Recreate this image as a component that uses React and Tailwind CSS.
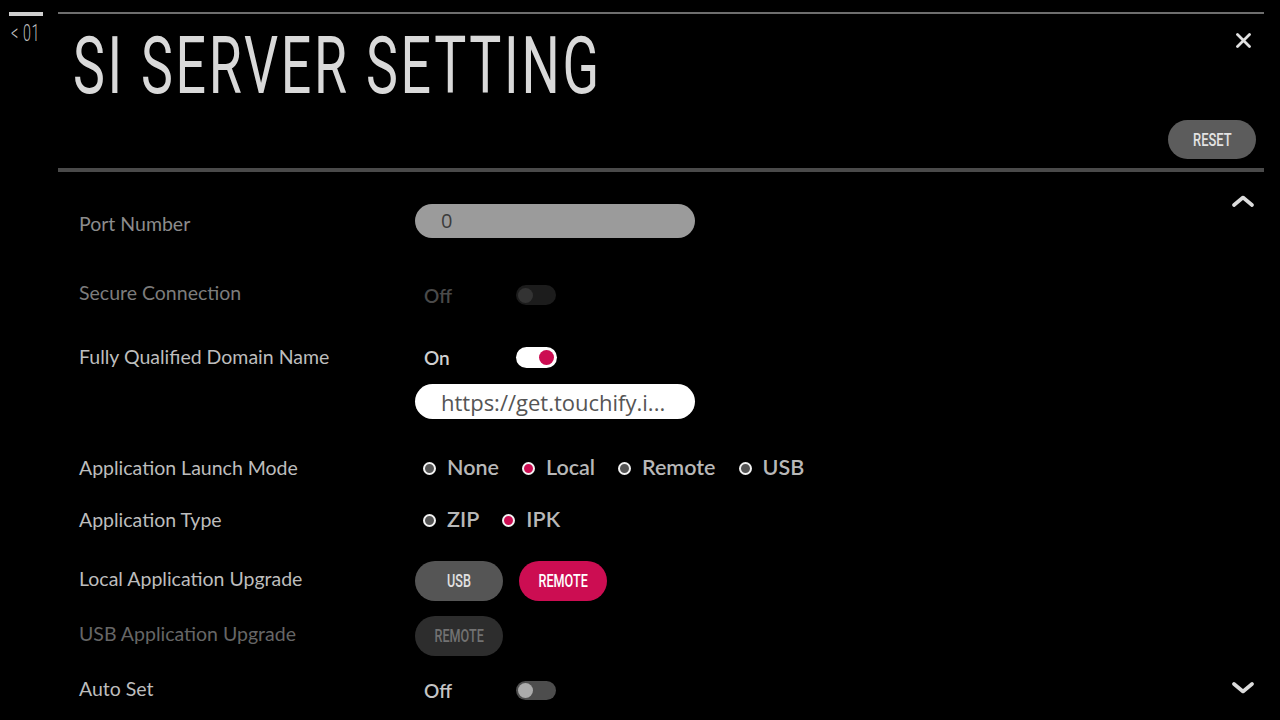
import React from 'react';

const Condensed = ({ children, className = '' }) => (
    <span className={`inline-block font-['Roboto',sans-serif] leading-none ${className}`}>
        {children}
    </span>
);

const Label = ({ children, tone = 'text-[#bdbdbd]', className = '' }) => (
    <div className={`w-[336px] shrink-0 text-[19.5px] leading-none ${tone} ${className}`}>
        {children}
    </div>
);

const Toggle = ({ state }) => {
    // state: 'disabled' | 'on' | 'off'
    if (state === 'on') {
        return (
            <div className="w-[41px] h-[21px] rounded-full bg-white flex items-center justify-end pr-[3px]">
                <div className="w-[15px] h-[15px] rounded-full bg-[#cc0d52]" />
            </div>
        );
    }
    if (state === 'disabled') {
        return (
            <div className="w-[40px] h-[20px] rounded-full bg-[#1c1c1c] flex items-center pl-[2px]">
                <div className="w-[15px] h-[15px] rounded-full bg-[#333]" />
            </div>
        );
    }
    return (
        <div className="w-[40px] h-[19px] rounded-full bg-[#4d4d4d] flex items-center pl-[2px]">
            <div className="w-[15px] h-[15px] rounded-full bg-[#ababab]" />
        </div>
    );
};

const SwitchValue = ({ text, tone, state }) => (
    <div className="flex items-center">
        <div className={`w-[101px] pl-[9px] text-[19px] font-semibold leading-none ${tone}`}>{text}</div>
        <Toggle state={state} />
    </div>
);

const Radio = ({ label, selected }) => (
    <div className="flex items-center gap-[11px]">
        <span
            className={`w-[13px] h-[13px] rounded-full border-2 border-[#f2f2f2] ${selected ? 'bg-[#cc0d52]' : 'bg-[#555]'}`}
        />
        <span className="text-[21.5px] font-semibold leading-none text-[#b8b8b8]">{label}</span>
    </div>
);

const PillButton = ({ children, variant }) => {
    const styles = {
        gray: 'bg-[#555] text-[#e0e0e0]',
        red: 'bg-[#cc0d52] text-white',
        dim: 'bg-[#2d2d2d] text-[#727272]',
    };
    return (
        <div className={`w-[88px] h-[40px] rounded-full flex items-center justify-center ${styles[variant]}`}>
            <Condensed className="text-[18px] font-medium scale-x-[0.7]">{children}</Condensed>
        </div>
    );
};

const Chevron = ({ up }) => (
    <svg width="22" height="12" viewBox="0 0 22 12" fill="none">
        <polyline
            points={up ? '2,10 11,2.5 20,10' : '2,2 11,9.5 20,2'}
            stroke="#dcdcdc"
            strokeWidth="3.6"
            strokeLinecap="round"
            strokeLinejoin="round"
        />
    </svg>
);

const App = () => {
    return (
        <div className="w-[1280px] h-[720px] bg-black overflow-hidden flex font-['Lato',sans-serif]">
            {/* breadcrumb */}
            <div className="w-[58px] shrink-0 pl-[9px] pt-[12px]">
                <div className="w-[34px] h-[4px] bg-[#cfcfcf]" />
                <div className="mt-[6px] pl-[2px]">
                    <Condensed className="text-[23px] font-light tracking-[0.04em] text-[#bdbdbd] origin-left scale-x-[0.62] whitespace-nowrap">
                        &lt;&nbsp;01
                    </Condensed>
                </div>
            </div>

            <div className="w-[1206px] shrink-0">
                {/* header */}
                <div className="mt-[12px] border-t-2 border-b-4 border-t-[#6e6e6e] border-b-[#4a4a4a] h-[160px] flex justify-between">
                    <div className="pl-[15px] pt-[13px]">
                        <Condensed className="text-[79px] tracking-[0.05em] text-[#d9d9d9] origin-left scale-x-[0.68] whitespace-nowrap">
                            SI SERVER SETTING
                        </Condensed>
                    </div>
                    <div className="flex flex-col items-end pr-[8px]">
                        <div className="mt-[19px] mr-[5px]">
                            <svg width="15" height="15" viewBox="0 0 15 15">
                                <path d="M1.5 1.5 L13.5 13.5 M13.5 1.5 L1.5 13.5" stroke="#e0e0e0" strokeWidth="2.8" strokeLinecap="round" />
                            </svg>
                        </div>
                        <div className="mt-[72px] w-[88px] h-[39px] rounded-full bg-[#5c5c5c] flex items-center justify-center">
                            <Condensed className="text-[19px] font-medium text-[#e2e2e2] scale-x-[0.68]">RESET</Condensed>
                        </div>
                    </div>
                </div>

                {/* settings list */}
                <div className="relative pl-[21px] pt-[32px]">
                    <div className="absolute right-[10px] top-[23px]">
                        <Chevron up />
                    </div>
                    <div className="absolute right-[10px] top-[510px]">
                        <Chevron />
                    </div>

                    <div className="flex items-center h-[34px]">
                        <Label tone="text-[#8c8c8c]" className="mt-[6px]">Port Number</Label>
                        <div className="w-[280px] h-[34px] rounded-full bg-[#9b9b9b] flex items-center pl-[26px]">
                            <span className="font-['Open_Sans',sans-serif] text-[20px] leading-none text-[#3c3c3c]">0</span>
                        </div>
                    </div>

                    <div className="flex items-center h-[20px] mt-[47px]">
                        <Label tone="text-[#7c7c7c]" className="mb-[4px]">Secure Connection</Label>
                        <SwitchValue text="Off" tone="text-[#4a4a4a]" state="disabled" />
                    </div>

                    <div className="flex items-center h-[21px] mt-[42px]">
                        <Label className="mb-[2px]">Fully Qualified Domain Name</Label>
                        <SwitchValue text="On" tone="text-[#cfcfcf]" state="on" />
                    </div>

                    <div className="flex items-center h-[35px] mt-[16px]">
                        <div className="w-[336px] shrink-0" />
                        <div className="w-[280px] h-[35px] rounded-full bg-white flex items-center pl-[26px]">
                            <span className="font-['Open_Sans',sans-serif] text-[22px] leading-none text-[#555]">
                                https://get.touchify.i...
                            </span>
                        </div>
                    </div>

                    <div className="flex items-center h-[16px] mt-[41px]">
                        <Label>Application Launch Mode</Label>
                        <div className="flex items-center gap-[23px] pl-[8px]">
                            <Radio label="None" />
                            <Radio label="Local" selected />
                            <Radio label="Remote" />
                            <Radio label="USB" />
                        </div>
                    </div>

                    <div className="flex items-center h-[16px] mt-[36px]">
                        <Label>Application Type</Label>
                        <div className="flex items-center gap-[23px] pl-[8px]">
                            <Radio label="ZIP" />
                            <Radio label="IPK" selected />
                        </div>
                    </div>

                    <div className="flex items-center h-[40px] mt-[33px]">
                        <Label className="mb-[4px]">Local Application Upgrade</Label>
                        <div className="flex items-center gap-[16px]">
                            <PillButton variant="gray">USB</PillButton>
                            <PillButton variant="red">REMOTE</PillButton>
                        </div>
                    </div>

                    <div className="flex items-center h-[40px] mt-[15px]">
                        <Label tone="text-[#666]" className="mb-[4px]">USB Application Upgrade</Label>
                        <PillButton variant="dim">REMOTE</PillButton>
                    </div>

                    <div className="flex items-center h-[19px] mt-[25px]">
                        <Label className="mb-[4px]">Auto Set</Label>
                        <SwitchValue text="Off" tone="text-[#c4c4c4]" state="off" />
                    </div>
                </div>
            </div>
        </div>
    );
};

export default App;
